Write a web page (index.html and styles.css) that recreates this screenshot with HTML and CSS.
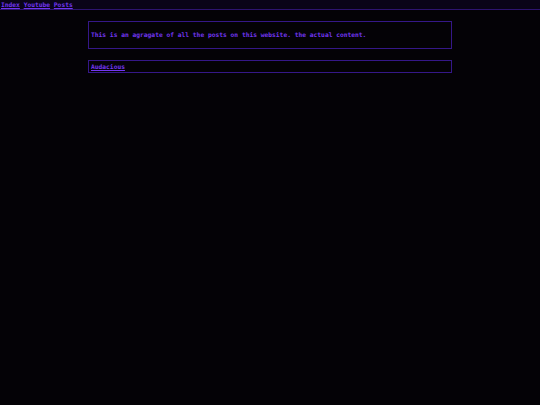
FILE: index.html
```html
<!DOCTYPE html>
<html>
<head>
<meta charset="utf-8">
<link rel="stylesheet" href="styles.css">
</head>
<body>
<nav class="nav">
  <a href="#">Index</a> <a href="#">Youtube</a> <a href="#">Posts</a>
</nav>
<main class="main">
  <div class="box intro">This is an agragate of all the posts on this website. the actual content.</div>
  <div class="box post"><a href="#">Audacious</a></div>
</main>
</body>
</html>
```
FILE: styles.css
```css
html, body {
  margin: 0;
  padding: 0;
}
body {
  background-color: #040206;
  min-height: 405px;
  font-family: "DejaVu Sans Mono", "Liberation Mono", monospace;
  font-weight: bold;
  font-size: 6.28px;
  color: #7236f0;
}
a {
  color: #7236f0;
  text-decoration: underline;
}
.nav {
  height: 9px;
  line-height: 9px;
  padding-left: 1px;
  background: #0a0418;
  border-bottom: 1px solid #2e1470;
}
.main {
  width: 364px;
  margin: 11px auto 0;
  display: flex;
  flex-direction: column;
  gap: 11px;
}
.box {
  border: 1px solid #351788;
  padding: 0 2px;
  line-height: 8px;
}
.intro {
  padding-top: 9px;
  padding-bottom: 9px;
}
.post {
  padding-top: 2px;
  padding-bottom: 1px;
}
```
